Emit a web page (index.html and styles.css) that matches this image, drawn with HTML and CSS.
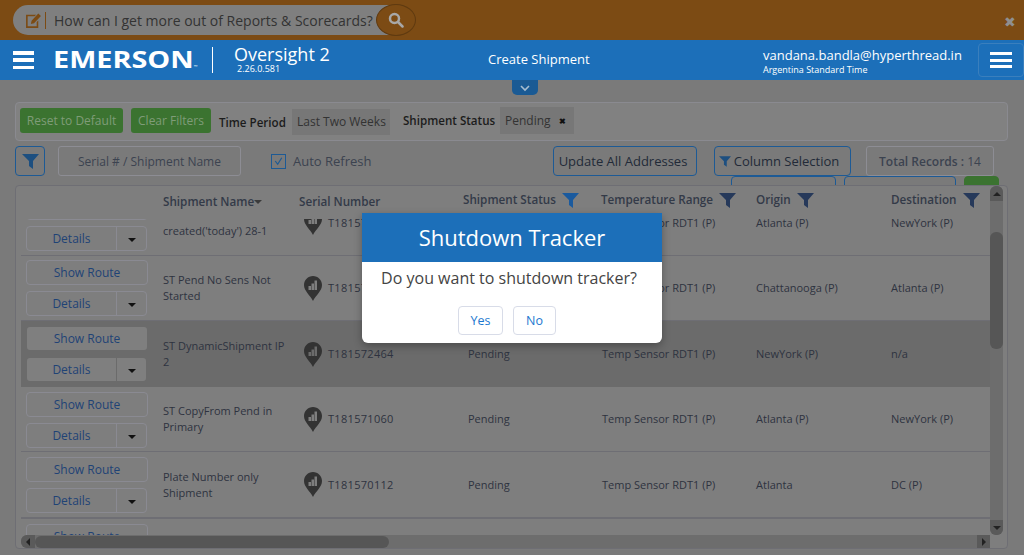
FILE: index.html
```html
<!DOCTYPE html>
<html lang="en">
<head>
<meta charset="utf-8">
<title>Create Shipment</title>
<link rel="stylesheet" href="styles.css">
</head>
<body>
<svg class="defs" width="0" height="0">
  <symbol id="funnel" viewBox="0 0 17 15"><path d="M0 0H17L11 7V15L7 12V7Z"/></symbol>
  <symbol id="pin" viewBox="0 0 18 25"><path fill-rule="evenodd" d="M9 0C4 0 0 4 0 9c0 6 6 10 9 16 3-6 9-10 9-16C18 4 14 0 9 0ZM4.500 10h2.500v4H4.500ZM7.500 7.500h2.500v6.500H7.500ZM10.500 4.500H13v9.500h-2.500Z"/></symbol>
</svg>

<div class="promo">
  <div class="ask">
    <svg class="edit" viewBox="0 0 16 14" width="17" height="15"><path d="M1 1.500h9.500L9 3H2.500v9.500h8.500V8.500l1.500-1.500v7H1ZM12.500.5l2.500 2.300-6.500 6.700-3 .8.700-3Z"/></svg>
    <span class="ask-text">How can I get more out of Reports &amp; Scorecards?</span>
    <span class="ask-go"><svg viewBox="0 0 16 16" width="16" height="16"><circle cx="6.500" cy="6.500" r="4.500"/><path d="M10 10l4.500 4.500"/></svg></span>
  </div>
  <span class="promo-close">✖</span>
</div>

<header class="nav">
  <button class="burger"><i></i><i></i><i></i></button>
  <span class="logo"><span class="logo-word">EMERSON<small>™</small></span></span>
  <div class="product"><span class="product-name">Oversight 2</span><span class="product-ver">2.26.0.581</span></div>
  <span class="page-title">Create Shipment</span>
  <div class="user"><span class="user-mail">vandana.bandla@hyperthread.in</span><span class="user-tz">Argentina Standard Time</span></div>
  <button class="burger burger-box"><i></i><i></i><i></i></button>
</header>

<main class="page">
  <div class="tab-row"><span class="tab"><svg viewBox="0 0 12 8" width="12" height="8"><path d="M2 2l4 4 4-4"/></svg></span></div>

  <section class="filters">
    <button class="btn-green">Reset to Default</button>
    <button class="btn-green">Clear Filters</button>
    <span class="filter-label l-time">Time Period</span>
    <span class="chip chip-time">Last Two Weeks</span>
    <span class="filter-label l-status">Shipment Status</span>
    <span class="chip chip-status">Pending <b>✖</b></span>
  </section>

  <section class="tools">
    <button class="tool-filter"><svg width="17" height="15"><use href="#funnel"/></svg></button>
    <span class="search">Serial # / Shipment Name</span>
    <span class="check"><svg viewBox="0 0 16 16" width="16" height="16"><path d="M4 8l3 4 5-8"/></svg></span>
    <span class="check-label">Auto Refresh</span>
    <button class="tool-btn t-update">Update All Addresses</button>
    <button class="tool-btn t-cols"><svg width="12" height="11"><use href="#funnel"/></svg> Column Selection</button>
    <span class="total">Total Records :&nbsp; <em>14</em></span>
  </section>

  <div class="peek"><span class="peek-a"></span><span class="peek-b"></span><span class="peek-c"></span></div>

  <section class="table">
    <div class="table-main">
      <div class="table-view">
        <div class="thead">
          <span></span>
          <span class="th th-name">Shipment Name<i class="sort"></i></span>
          <span class="th th-serial">Serial Number</span>
          <span class="th th-status">Shipment Status <svg class="active" width="17" height="15"><use href="#funnel"/></svg></span>
          <span class="th th-temp">Temperature Range <svg width="17" height="15"><use href="#funnel"/></svg></span>
          <span class="th th-origin">Origin <svg width="17" height="15"><use href="#funnel"/></svg></span>
          <span class="th th-dest">Destination <svg width="17" height="15"><use href="#funnel"/></svg></span>
        </div>
        <div class="tbody">
          <div class="row row-first">
            <div class="acts"><button class="act">Show Route</button><div class="split"><span>Details</span><span class="caret"><i></i></span></div></div>
            <div class="cell cell-low">created('today') 28-1</div>
            <div class="cell cell-serial"><svg width="18" height="25"><use href="#pin"/></svg>T181572895</div>
            <div class="cell">Pending</div>
            <div class="cell">Temp Sensor RDT1 (P)</div>
            <div class="cell">Atlanta (P)</div>
            <div class="cell">NewYork (P)</div>
          </div>
          <div class="row row-tight">
            <div class="acts"><button class="act">Show Route</button><div class="split"><span>Details</span><span class="caret"><i></i></span></div></div>
            <div class="cell">ST Pend No Sens Not Started</div>
            <div class="cell cell-serial"><svg width="18" height="25"><use href="#pin"/></svg>T181572701</div>
            <div class="cell">Pending</div>
            <div class="cell">Temp Sensor RDT1 (P)</div>
            <div class="cell">Chattanooga (P)</div>
            <div class="cell">Atlanta (P)</div>
          </div>
          <div class="row row-selected">
            <div class="acts"><button class="act">Show Route</button><div class="split"><span>Details</span><span class="caret"><i></i></span></div></div>
            <div class="cell">ST DynamicShipment IP 2</div>
            <div class="cell cell-serial"><svg width="18" height="25"><use href="#pin"/></svg>T181572464</div>
            <div class="cell">Pending</div>
            <div class="cell">Temp Sensor RDT1 (P)</div>
            <div class="cell">NewYork (P)</div>
            <div class="cell">n/a</div>
          </div>
          <div class="row row-short">
            <div class="acts"><button class="act">Show Route</button><div class="split"><span>Details</span><span class="caret"><i></i></span></div></div>
            <div class="cell">ST CopyFrom Pend in Primary</div>
            <div class="cell cell-serial"><svg width="18" height="25"><use href="#pin"/></svg>T181571060</div>
            <div class="cell">Pending</div>
            <div class="cell">Temp Sensor RDT1 (P)</div>
            <div class="cell">Atlanta (P)</div>
            <div class="cell">NewYork (P)</div>
          </div>
          <div class="row row-last">
            <div class="acts"><button class="act">Show Route</button><div class="split"><span>Details</span><span class="caret"><i></i></span></div></div>
            <div class="cell">Plate Number only Shipment</div>
            <div class="cell cell-serial"><svg width="18" height="25"><use href="#pin"/></svg>T181570112</div>
            <div class="cell">Pending</div>
            <div class="cell">Temp Sensor RDT1 (P)</div>
            <div class="cell">Atlanta</div>
            <div class="cell">DC (P)</div>
          </div>
          <div class="row">
            <div class="acts"><button class="act">Show Route</button></div>
          </div>
        </div>
      </div>
      <div class="hbar"><span class="arrow-side side-left"><i class="arrow-left"></i></span><span class="hthumb"></span><span class="arrow-side side-right"><i class="arrow-right"></i></span></div>
    </div>
    <div class="vbar"><span class="arrow-box"><i class="arrow-up"></i></span><span class="vthumb"></span><span class="arrow-box box-end"><i class="arrow-down"></i></span></div>
  </section>
</main>

<div class="dialog">
  <h2 class="dialog-title">Shutdown Tracker</h2>
  <p class="dialog-text">Do you want to shutdown tracker?</p>
  <div class="dialog-actions"><button class="dlg-btn">Yes</button><button class="dlg-btn">No</button></div>
</div>
</body>
</html>
```

FILE: styles.css
```css
* { box-sizing: border-box; }
html, body { margin: 0; height: 555px; overflow: hidden; }
body { font-family: "Open Sans", "Liberation Sans", sans-serif; background: #7a7a7a; color: #333; position: relative; }
button { font-family: inherit; padding: 0; cursor: pointer; }
.defs { position: absolute; }

.promo { height: 40px; background: #7c4b14; display: flex; align-items: flex-start; justify-content: space-between; padding: 4px 9px 0 13px; }
.ask { width: 403px; height: 32px; display: flex; align-items: center; position: relative; }
.ask::before { content: ""; position: absolute; left: 0; top: 1px; width: 390px; height: 30px; background: #7f7f7f; border-radius: 15px; }
.edit { position: relative; margin-left: 12px; fill: #7c4b14; flex: none; }
.ask-text { position: relative; margin-left: 3px; padding-left: 8px; border-left: 1px solid #7c4b14; font-size: 14px; line-height: 17px; color: #333; white-space: nowrap; }
.ask-go { position: absolute; right: 0; top: 0; width: 40px; height: 32px; border-radius: 20px / 16px; background: #7c4b14; border: 1px solid #5f3a10; display: flex; align-items: center; justify-content: center; }
.ask-go svg { fill: none; stroke: #a8a8a8; stroke-width: 2.500; stroke-linecap: round; }
.promo-close { font-size: 14px; color: #8f8f8f; margin-top: 10px; line-height: 15px; margin-right: -1px; }

.nav { height: 40px; background: #1c6fb9; color: #fff; display: flex; align-items: center; padding-left: 13px; position: relative; }
.burger { width: 21px; height: 18px; background: none; border: 0; display: flex; flex-direction: column; justify-content: space-between; flex: none; }
.burger i { display: block; height: 3.500px; background: #fff; width: 100%; }
.logo { margin-left: 19px; width: 160px; height: 26px; border-right: 1px solid #fff; display: block; }
.logo-word { display: inline-block; font-size: 24px; font-weight: 700; line-height: 24px; white-space: nowrap; transform: scaleX(1.200); transform-origin: left center; }
.logo small { font-size: 4px; vertical-align: baseline; font-weight: 400; }
.product { margin-left: 21px; width: 254px; display: flex; flex-direction: column; }
.product-name { font-size: 18px; line-height: 20px; margin-top: -2px; }
.product-ver { font-size: 9px; line-height: 10px; margin-left: 3px; }
.page-title { width: 275px; font-size: 13px; margin-top: -2px; }
.user { width: 215px; display: flex; flex-direction: column; padding-top: 3px; }
.user-mail { font-size: 13px; line-height: 17px; }
.user-tz { font-size: 9px; line-height: 12px; }
.burger-box { width: 46px; height: 34px; border: 1px solid #3a7fbd; border-radius: 4px; padding: 8px 11px; margin-left: 0; }
.burger-box i { height: 3px; }

.page { padding: 0 16px 0 15px; }
.tab-row { height: 22px; padding-left: 497px; }
.tab { display: flex; align-items: center; justify-content: center; width: 26px; height: 15px; background: #1a5a94; border-radius: 0 0 5px 5px; }
.tab svg { fill: none; stroke: #a8bdd0; stroke-width: 1.600; }

.filters { height: 39px; background: #818181; border: 1px solid #8a8a90; border-radius: 4px; display: flex; align-items: center; padding: 0 0 3px 4px; font-size: 12px; }
.btn-green { height: 25px; background: #3b7330; color: #7f9c78; border: 0; border-radius: 3px; font-size: 12px; }
.btn-green:nth-child(1) { width: 103px; }
.btn-green:nth-child(2) { width: 80px; margin-left: 8px; }
.filter-label { color: #1c1c1c; font-weight: 600; white-space: nowrap; font-size: 11.600px; }
.l-time { margin-left: 8px; margin-top: 5px; width: 68px; }
.l-status { margin-left: 13px; width: 92px; }
.chip { height: 26px; background: #777; display: flex; align-items: center; padding: 0 5px; color: #333; white-space: nowrap; font-size: 12px; }
.chip-time { margin-left: 5px; width: 98px; margin-top: 3px; }
.chip-status { margin-left: 5px; width: 74px; height: 27px; }
.chip b { font-size: 8px; color: #111; margin-left: 8px; }

.tools { height: 30px; margin-top: 5px; display: flex; align-items: center; font-size: 12px; }
.tool-filter { width: 30px; height: 30px; background: none; border: 1px solid #1d5a95; border-radius: 4px; display: flex; align-items: center; justify-content: center; fill: #1d4f80; }
.search { width: 183px; height: 30px; margin-left: 13px; border: 1px solid #8d8d94; border-radius: 3px; display: flex; align-items: center; justify-content: center; color: #3c4350; }
.check { width: 15px; height: 15px; margin-left: 30px; border: 1px solid #1d5a95; display: flex; align-items: center; justify-content: center; }
.check svg { fill: none; stroke: #1d5a95; stroke-width: 1.500; }
.check-label { margin-left: 7px; color: #3c4350; width: 260px; font-size: 13px; }
.tool-btn { height: 30px; background: none; border: 1px solid #1d5a95; border-radius: 4px; color: #222a38; font-size: 13px; display: flex; align-items: center; justify-content: center; gap: 3px; padding-right: 4px; }
.tool-btn svg { fill: #1d4f80; }
.t-update { width: 144px; }
.t-cols { width: 137px; margin-left: 17px; padding-right: 7px; }
.total { width: 128px; height: 30px; margin-left: 15px; border: 1px solid #8d8d94; border-radius: 3px; display: flex; align-items: center; justify-content: center; color: #3c4350; font-weight: 600; }
.total em { font-style: normal; font-weight: 400; }

.peek { height: 9px; display: flex; overflow: hidden; padding-left: 716px; }
.peek span { height: 20px; display: block; border: 1px solid #1d5a95; border-radius: 4px; }
.peek-a { width: 105px; }
.peek-b { width: 112px; margin-left: 8px; }
.peek-c { width: 35px; margin-left: 8px; background: #3b7330; border-color: #3b7330 !important; }

.table { width: 993px; height: 364px; border: 1px solid #6e6e74; border-radius: 4px; background: #7e7e7e; display: flex; padding: 0 4px 0 5px; }
.table-main { width: 969px; display: flex; flex-direction: column; }
.table-view { height: 349px; display: flex; flex-direction: column; overflow: hidden; }
.thead, .row { display: grid; grid-template-columns: 142px 141px 164px 134px 154px 135px 99px; flex: none; }
.thead { height: 33px; align-items: center; font-size: 11.700px; font-weight: 600; color: #333a48; }
.th { display: flex; align-items: center; white-space: nowrap; gap: 6px; margin-top: -7px; }
.th svg { fill: #26395a; flex: none; margin-top: 2px; }
.th svg.active { fill: #1a5a9e; }
.th-name, .th-serial { margin-top: -4px; }
.th-serial { margin-left: -5px; }
.th-status { margin-left: -5px; }
.th-temp { margin-left: -1px; }
.sort { width: 0; height: 0; border: 4px solid transparent; border-top-color: #3a3a3a; border-bottom: 0; margin: 3px 0 0 -6px; }
.tbody { flex: 1; overflow: hidden; }
.row { height: 65px; border-bottom: 1px solid #6e6e74; font-size: 11px; }
.row-first { height: 66px; margin-top: -29px; }
.row-selected { background: #6b6b6b; height: 66px; border-bottom: 0; }
.row-last { height: 67px; border-bottom-width: 2px; }
.acts { padding: 5px 0 0 5px; display: flex; flex-direction: column; gap: 6px; }
.row-tight .acts { padding-top: 4px; }
.act { width: 122px; height: 25px; background: none; border: 1px solid #8a8a92; border-radius: 4px; color: #1f4376; font-size: 12px; }
.split { width: 121px; height: 25px; border: 1px solid #8a8a92; border-radius: 4px; display: flex; color: #1f4376; font-size: 12px; }
.split span:first-child { width: 90px; display: flex; align-items: center; justify-content: center; border-right: 1px solid #8a8a92; }
.caret { flex: 1; display: flex; align-items: center; justify-content: center; }
.caret i { border: 4px solid transparent; border-top-color: #111; border-bottom: 0; margin-top: 2px; }
.row-selected .act, .row-selected .split { background: #7f7f7f; background-clip: padding-box; border-color: transparent; }
.row-selected .split span:first-child { border-right-color: #6b6b6b; }
.cell { display: flex; align-items: center; color: #2e3340; line-height: 16px; padding-right: 16px; white-space: normal; }
.cell-low { padding-top: 16px; }
.cell-serial { gap: 6px; letter-spacing: .3px; }
.cell-serial svg { fill: #333; flex: none; }

.hbar { height: 13px; display: flex; align-items: center; background: #6d6d6d; border-radius: 6px 0 0 6px; }
.hthumb { width: 354px; height: 12px; background: #565656; border-radius: 6px; }
.arrow-side { width: 14px; height: 13px; background: #5a5a5a; display: flex; align-items: center; justify-content: center; flex: none; }
.side-left { border-radius: 6px 0 0 6px; }
.side-right { width: 13px; margin-left: auto; }
.arrow-left { border: 4px solid transparent; border-right-color: #222; border-left: 0; }
.arrow-right { border: 4px solid transparent; border-left-color: #222; border-right: 0; }
.vbar { width: 13px; height: 349px; background: #6d6d6d; border-radius: 6px; display: flex; flex-direction: column; }
.arrow-box { height: 15px; background: #5a5a5a; display: flex; align-items: center; justify-content: center; border-radius: 6px 6px 0 0; flex: none; }
.box-end { border-radius: 0 0 6px 6px; margin-top: auto; }
.arrow-up { border: 4px solid transparent; border-bottom-color: #222; border-top: 0; }
.arrow-down { border: 4px solid transparent; border-top-color: #222; border-bottom: 0; }
.vthumb { height: 117px; margin-top: 31px; background: #565656; border-radius: 6px; }

.dialog { position: absolute; left: 362px; top: 213px; width: 300px; height: 130px; background: #fff; border-radius: 0 0 6px 6px; box-shadow: 0 3px 9px rgba(0,0,0,.3); }
.dialog-title { margin: 0; height: 49px; background: #1c6fb9; color: #fff; font-size: 22px; font-weight: 400; line-height: 49px; text-align: center; }
.dialog-text { margin: 5px 0 0; padding-right: 6px; font-size: 16px; line-height: 22px; color: #444; text-align: center; }
.dialog-actions { display: flex; justify-content: center; gap: 10px; margin-top: 17px; padding-right: 10px; }
.dlg-btn { height: 29px; background: #fff; border: 1px solid #d8dce8; border-radius: 4px; color: #1c78d0; font-size: 12.500px; width: 45px; }
.dlg-btn:last-child { width: 43px; }
```
